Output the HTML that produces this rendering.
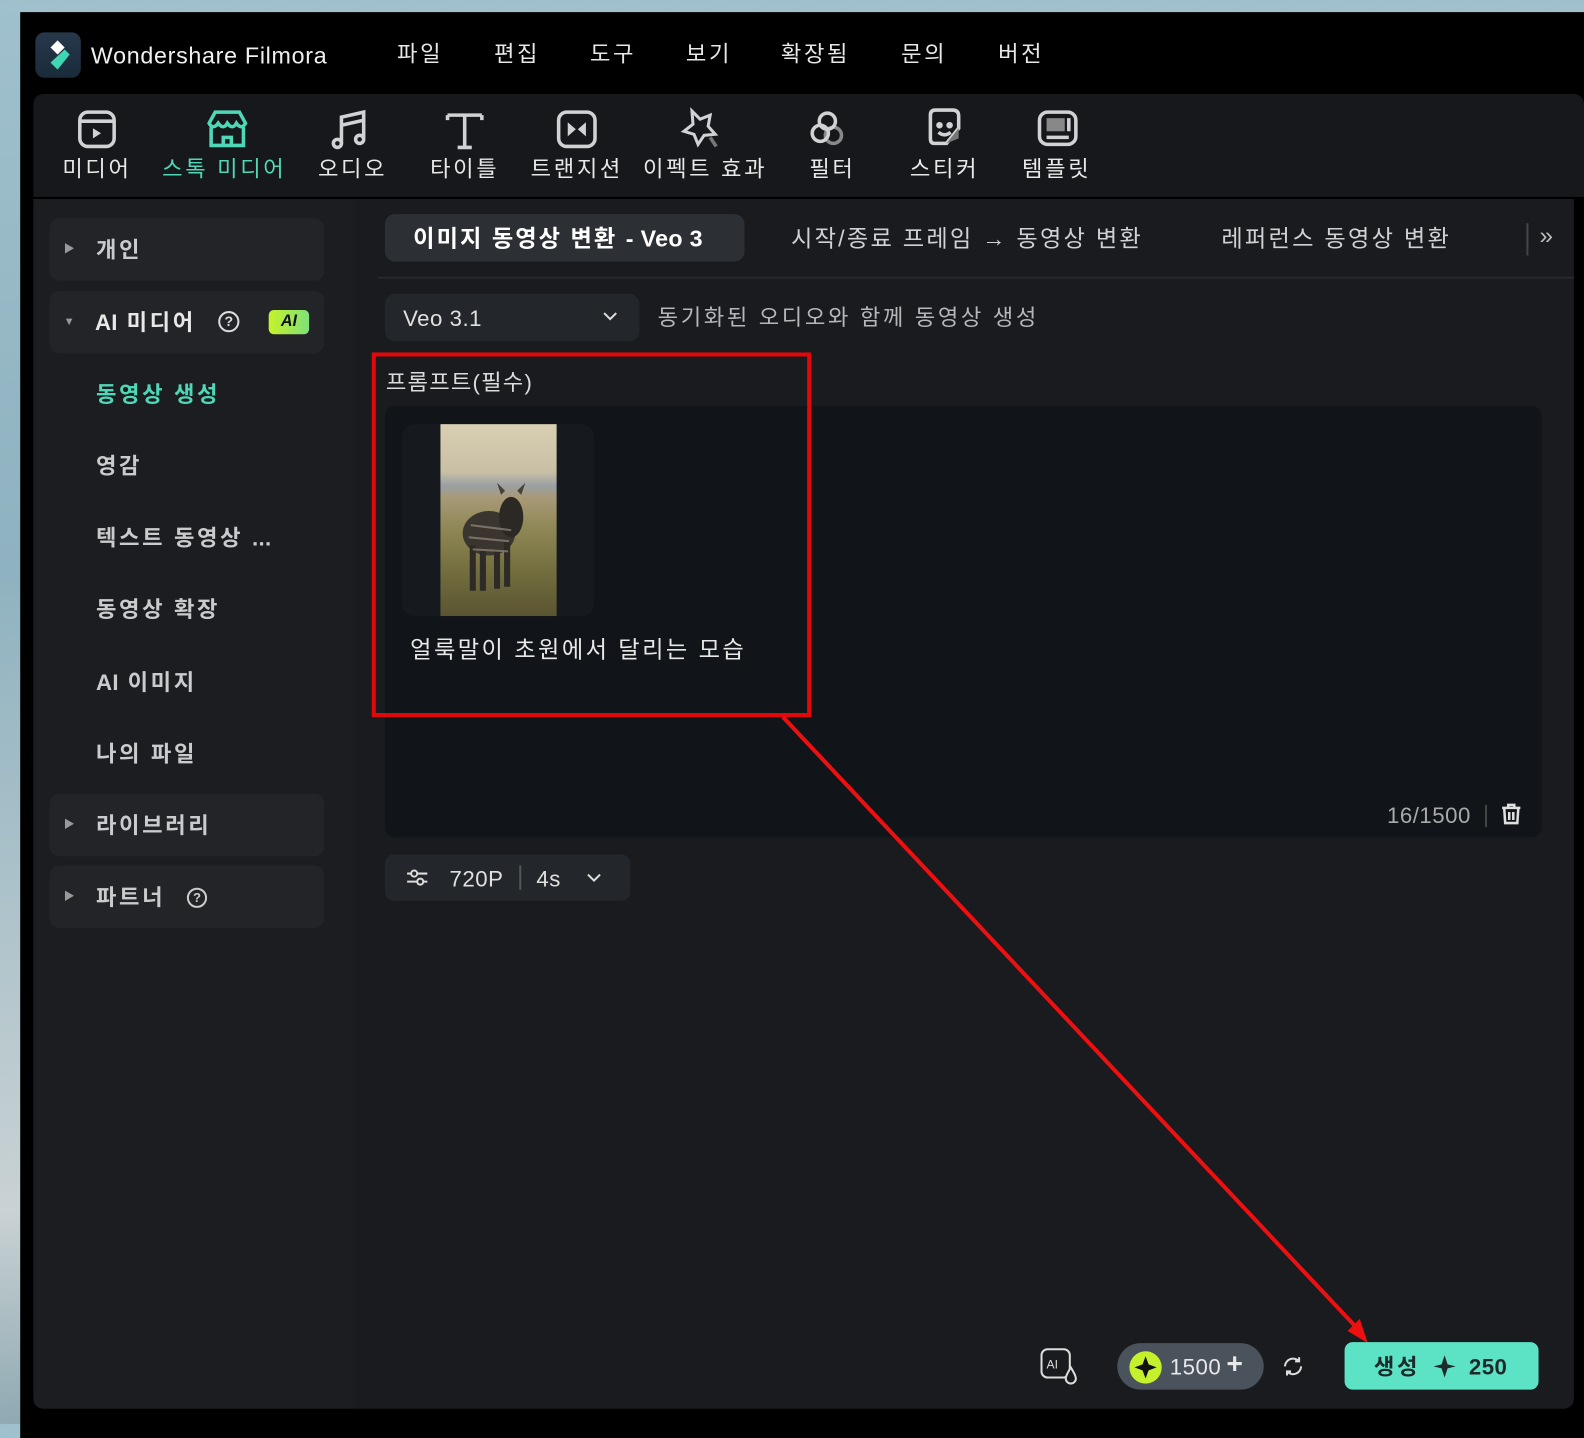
<!DOCTYPE html>
<html><head><meta charset="utf-8"><style>
*{margin:0;padding:0;box-sizing:border-box}
body{width:1584px;height:1424px;overflow:hidden;background:linear-gradient(180deg,#9fc0cc,#8fb2c0 40%,#c9d2d4 85%,#8fa9b2);font-family:"Liberation Sans","Noto Sans CJK KR",sans-serif;color:#e6e8ea;letter-spacing:2.6px}
#w{position:absolute;left:0;top:0;width:1568px;height:1410px;transform:scale(1.0102,1.0099);transform-origin:0 0}
.a{position:absolute}
.win{left:20px;top:12px;width:1564px;height:1412px;background:#000}
.t{position:absolute;white-space:nowrap;line-height:1}
.menu{font-size:22px;color:#e8e8e8;top:43px}
.tb{left:33px;top:93px;width:1535px;height:102px;background:#16181b;border-radius:10px 10px 0 0}
.lbl{font-size:22px;top:157px;color:#e8e8e8;transform:translateX(-50%)}
.side{left:33px;top:197px;width:317px;height:1198px;background:#1b1d20;border-radius:0 0 0 10px}
.main{left:350px;top:197px;width:1208px;height:1198px;background:#191b1e;border-radius:0 0 10px 0}
.box{left:49px;width:272px;height:62px;background:#222428;border-radius:10px}
.si{font-size:22px;font-weight:bold;color:#c9cbcd}
.lat{letter-spacing:0.5px}
.l0{letter-spacing:0.3px}
</style></head><body>
<div id="w">
<div class="a win"></div>
<div class="a" style="left:35px;top:32px;width:45px;height:45px;border-radius:9px;background:linear-gradient(#26384a,#1a2c3a)"></div>
<svg class="a" style="left:35px;top:32px" width="45" height="45"><path d="M22 8 L29 15 L22 22 L15 15Z" fill="#fff"/><path d="M29 17 L34 22 L22 37 L15 30 Z" fill="#3fd6b4"/></svg>
<div class="t" style="left:90px;top:44px;font-size:23px;color:#f0f0f0;letter-spacing:0.7px">Wondershare Filmora</div>
<div class="t menu" style="left:393px">파일</div><div class="t menu" style="left:489px">편집</div><div class="t menu" style="left:584px">도구</div><div class="t menu" style="left:679px">보기</div><div class="t menu" style="left:773px">확장됨</div><div class="t menu" style="left:892px">문의</div><div class="t menu" style="left:988px">버전</div>
<div class="a tb"></div>
<svg class="a" style="left:33px;top:100px" width="1100" height="55" fill="none" stroke="#d0d2d4" stroke-width="3.5">
<rect x="46" y="11" width="34" height="34" rx="8"/><path d="M47 20h32" /><path d="M59 27v10l8-5z" fill="#d0d2d4" stroke="none"/>
<g stroke="#4fd8b8"><path d="M174 22 l6-11h24l6 11 q-4 7-9 0 q-4 7-9 0 q-4 7-9 0 q-5 7-9 0z"/><path d="M176 26v18h32v-18"/><path d="M188 44v-8h8v8"/></g>
<path d="M305 42V16l22-5v26"/><circle cx="301" cy="42" r="4"/><circle cx="323" cy="38" r="4"/><path d="M305 24l22-5"/>
<path d="M410 14h34M427 14v32M420 46h14M410 14v5M444 14v5"/>
<rect x="520" y="11" width="36" height="34" rx="8"/><path d="M529 21l8 7-8 7zM547 21l-8 7 8 7z" fill="#d0d2d4" stroke="none"/>
<path d="M652 10l8 8 10-4-2 11 7 8-11 1-6 9-4-10-10-3 9-7z" stroke-width="3"/><path d="M670 36l6 9" stroke="#777"/>
<circle cx="792" cy="34" r="8" stroke="#888"/><circle cx="786" cy="20" r="8"/><circle cx="779" cy="32" r="8"/>
<path d="M888 14q0-5 5-5h17q6 0 6 6v12l-12 15h-12q-4 0-4-5z"/><circle cx="897" cy="24" r="1.5" fill="#d0d2d4"/><circle cx="907" cy="24" r="1.5" fill="#d0d2d4"/><path d="M896 31q6 5 12 0"/><path d="M904 42l12-15v10z" fill="#777" stroke="none"/>
<rect x="996" y="11" width="36" height="32" rx="8"/><rect x="1003" y="17" width="18" height="13" fill="#888" stroke="none"/><path d="M1025 17v13M1003 36h22"/>
</svg>
<div class="t lbl" style="left:96px">미디어</div><div class="t lbl" style="left:222px;color:#4fd8b8">스톡 미디어</div><div class="t lbl" style="left:349px">오디오</div><div class="t lbl" style="left:460px">타이틀</div><div class="t lbl" style="left:571px">트랜지션</div><div class="t lbl" style="left:698px">이펙트 효과</div><div class="t lbl" style="left:824px">필터</div><div class="t lbl" style="left:935px">스티커</div><div class="t lbl" style="left:1046px">템플릿</div>
<div class="a side"></div><div class="a main"></div>
<div class="a box" style="top:216px"></div><div class="t si" style="left:95px;top:237px">개인</div><div class="t" style="left:63px;top:242px;font-size:11px;color:#999">▶</div>
<div class="a box" style="top:288px"></div><div class="t si" style="left:94px;top:309px;color:#e8e8e8"><span class="l0">AI</span> 미디어</div><div class="t" style="left:63px;top:314px;font-size:11px;color:#999">▼</div>
<div class="a" style="left:216px;top:308px;width:21px;height:21px;border:2px solid #ddd;border-radius:50%;font-size:14px;text-align:center;line-height:17px;color:#ddd;font-weight:bold;letter-spacing:0">?</div>
<div class="a" style="left:266px;top:307px;width:40px;height:24px;border-radius:5px;background:linear-gradient(90deg,#c6f22a,#7fe07a);color:#111;font-weight:bold;font-style:italic;font-size:16px;text-align:center;line-height:24px;letter-spacing:0">AI</div>
<div class="t si" style="left:95px;top:380px;color:#4fd8b8">동영상 생성</div>
<div class="t si" style="left:95px;top:451px">영감</div>
<div class="t si" style="left:95px;top:522px">텍스트 동영상 <span class="l0">...</span></div>
<div class="t si" style="left:95px;top:593px">동영상 확장</div>
<div class="t si" style="left:95px;top:665px"><span class="l0">AI</span> 이미지</div>
<div class="t si" style="left:95px;top:736px">나의 파일</div>
<div class="a box" style="top:786px"></div><div class="t si" style="left:95px;top:807px">라이브러리</div><div class="t" style="left:63px;top:812px;font-size:11px;color:#999">▶</div>
<div class="a box" style="top:857px"></div><div class="t si" style="left:95px;top:878px">파트너</div><div class="t" style="left:63px;top:883px;font-size:11px;color:#999">▶</div>
<div class="a" style="left:185px;top:879px;width:20px;height:20px;border:2px solid #ccc;border-radius:50%;font-size:13px;text-align:center;line-height:16px;color:#ccc;font-weight:bold;letter-spacing:0">?</div>
<div class="a" style="left:381px;top:212px;width:356px;height:47px;background:#2c2f34;border-radius:10px"></div>
<div class="t" style="left:409px;top:225px;font-size:23px;font-weight:bold;color:#fff;letter-spacing:2px">이미지 동영상 변환 <span class="l0">- Veo 3</span></div>
<div class="t" style="left:783px;top:225px;font-size:23px;color:#cfd1d3;letter-spacing:2.2px">시작/종료 프레임 → 동영상 변환</div>
<div class="t" style="left:1209px;top:225px;font-size:23px;color:#cfd1d3;letter-spacing:2.2px">레퍼런스 동영상 변환</div>
<div class="a" style="left:1511px;top:221px;width:2px;height:32px;background:#444"></div>
<div class="t" style="left:1524px;top:222px;font-size:24px;color:#bbb;letter-spacing:0">»</div>
<div class="a" style="left:374px;top:274px;width:1184px;height:2px;background:#25282c"></div>
<div class="a" style="left:381px;top:291px;width:252px;height:47px;background:#23262a;border-radius:10px"></div>
<div class="t lat" style="left:399px;top:305px;font-size:22px;color:#e0e0e0">Veo 3.1</div>
<svg class="a" style="left:596px;top:308px" width="16" height="10"><path d="M2 2l6 6 6-6" stroke="#ddd" stroke-width="2" fill="none"/></svg>
<div class="t" style="left:651px;top:304px;font-size:22px;color:#b5b7b9;letter-spacing:2.6px">동기화된 오디오와 함께 동영상 생성</div>
<div class="t" style="left:382px;top:368px;font-size:22px;color:#dcdcdc;letter-spacing:1.2px">프롬프트(필수)</div>
<div class="a" style="left:381px;top:402px;width:1145px;height:427px;background:#111418;border-radius:10px"></div>
<div class="a" style="left:398px;top:420px;width:190px;height:190px;background:#161a1e;border-radius:12px"></div>
<div class="a" style="left:436px;top:420px;width:115px;height:190px;background:linear-gradient(180deg,#d9cfb3 0%,#c8bfa5 25%,#9aa0a4 32%,#a89a78 38%,#8e8654 55%,#6f6a3c 80%,#5b5432 100%)"></div>
<svg class="a" style="left:436px;top:420px" width="115" height="190"><ellipse cx="48" cy="108" rx="26" ry="22" fill="#3a352e"/><ellipse cx="70" cy="92" rx="12" ry="20" fill="#2c2824"/><path d="M60 70l-4-12 8 8zM80 70l4-12-8 8z" fill="#4a4035"/><path d="M32 120v45M42 125v40M56 125v38M66 116v45" stroke="#2e2a25" stroke-width="6"/><path d="M30 100l40 5M28 112l40 4M32 124l35 2" stroke="#bbb0a0" stroke-width="2" opacity=".5"/></svg>
<div class="t" style="left:406px;top:632px;font-size:23px;color:#e8e8e8;letter-spacing:2.4px">얼룩말이 초원에서 달리는 모습</div>
<div class="t lat" style="left:1373px;top:797px;font-size:22px;color:#a8aaac">16/1500</div>
<div class="a" style="left:1470px;top:797px;width:2px;height:22px;background:#444"></div>
<svg class="a" style="left:1485px;top:795px" width="22" height="24" fill="none" stroke="#e0e0e0" stroke-width="2.5"><path d="M2 5h18M8 5V2h6v3M4 5l1 15h12l1-15M9 9v8M13 9v8"/></svg>
<div class="a" style="left:381px;top:846px;width:243px;height:46px;background:#23262a;border-radius:9px"></div>
<svg class="a" style="left:402px;top:859px" width="22" height="20" stroke="#ddd" stroke-width="2" fill="none"><path d="M1 6h20M1 14h20"/><circle cx="8" cy="6" r="3" fill="#23262a"/><circle cx="14" cy="14" r="3" fill="#23262a"/></svg>
<div class="t lat" style="left:445px;top:860px;font-size:22px;color:#e0e0e0">720P</div>
<div class="a" style="left:514px;top:857px;width:2px;height:24px;background:#555"></div>
<div class="t lat" style="left:531px;top:860px;font-size:22px;color:#e0e0e0">4s</div>
<svg class="a" style="left:580px;top:864px" width="16" height="10"><path d="M2 2l6 6 6-6" stroke="#ddd" stroke-width="2" fill="none"/></svg>
<div class="a" style="left:368px;top:349px;width:435px;height:361px;border:4px solid #e2080a"></div>
<svg class="a" style="left:0;top:0" width="1584" height="1424"><line x1="775" y1="710" x2="1346" y2="1318" stroke="#ee1010" stroke-width="4"/><path d="M1354 1330l-20-12 12-12z" fill="#ee1010"/></svg>
<svg class="a" style="left:1029px;top:1334px;letter-spacing:0" width="40" height="38" fill="none" stroke="#ddd" stroke-width="2"><rect x="2" y="2" width="28" height="28" rx="6"/><text x="7" y="21" font-size="12" fill="#ddd" stroke="none" font-family="Liberation Sans">AI</text><path d="M31 20q-5 8-5 11a5 5 0 0 0 10 0q0-3-5-11z" fill="#191b1e"/></svg>
<div class="a" style="left:1106px;top:1330px;width:145px;height:46px;background:#4a525c;border-radius:23px"></div>
<div class="a" style="left:1118px;top:1338px;width:32px;height:32px;background:#c5f02c;border-radius:50%"></div>
<svg class="a" style="left:1118px;top:1338px" width="32" height="32"><path d="M16 5l3 8 8 3-8 3-3 8-3-8-8-3 8-3z" fill="#111"/></svg>
<div class="t lat" style="left:1158px;top:1343px;font-size:22px;color:#e8e8e8">1500</div>
<div class="t" style="left:1214px;top:1337px;font-size:28px;font-weight:bold;color:#e8e8e8;letter-spacing:0">+</div>
<svg class="a" style="left:1268px;top:1341px" width="24" height="24" fill="none" stroke="#ddd" stroke-width="2"><path d="M4 12a8 8 0 0 1 14-5M20 12a8 8 0 0 1-14 5M18 3v4h-4M6 21v-4h4"/></svg>
<div class="a" style="left:1331px;top:1329px;width:192px;height:47px;background:#5ce3c5;border-radius:8px"></div>
<div class="t" style="left:1360px;top:1343px;font-size:22px;font-weight:bold;color:#1e2a2a">생성</div>
<svg class="a" style="left:1418px;top:1340px" width="24" height="26"><path d="M12 2l3 9 8 2-8 2-3 9-3-9-8-2 8-2z" fill="#1e2a2a"/></svg>
<div class="t lat" style="left:1454px;top:1343px;font-size:22px;font-weight:bold;color:#1e2a2a">250</div>
</div>
</body></html>
